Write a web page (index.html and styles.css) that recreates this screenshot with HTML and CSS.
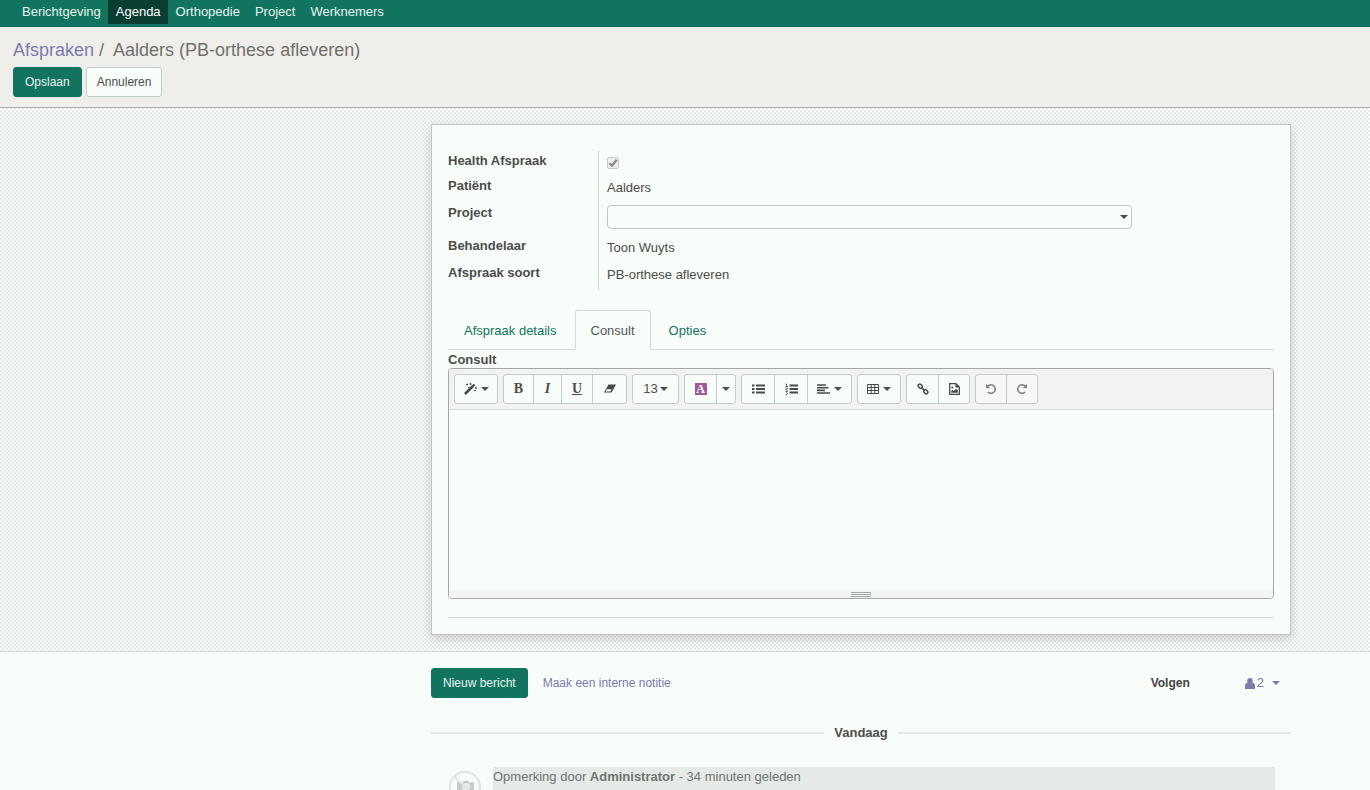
FILE: index.html
```html
<!DOCTYPE html>
<html lang="nl">
<head>
<meta charset="utf-8">
<title>Aalders (PB-orthese afleveren)</title>
<link rel="stylesheet" href="styles.css">
</head>
<body>
<nav class="navbar">
  <a href="#" class="nav-link">Berichtgeving</a>
  <a href="#" class="nav-link active">Agenda</a>
  <a href="#" class="nav-link">Orthopedie</a>
  <a href="#" class="nav-link">Project</a>
  <a href="#" class="nav-link">Werknemers</a>
</nav>
<header class="control-panel">
  <div class="breadcrumb"><a href="#">Afspraken</a><span class="sep">/</span><span>Aalders (PB-orthese afleveren)</span></div>
  <div class="actions">
    <button class="btn primary">Opslaan</button>
    <button class="btn">Annuleren</button>
  </div>
</header>
<main class="sheet-bg">
  <section class="sheet">
    <div class="group">
      <div class="row check-row"><label for="health">Health Afspraak</label><div class="cell"><span class="check"><input type="checkbox" id="health" checked disabled><svg viewBox="0 0 12 12" width="12" height="12"><path d="M2.5 6.2 5 8.7 9.7 2.8" fill="none" stroke="#858885" stroke-width="2.2"/></svg></span></div></div>
      <div class="row"><span class="label">Patiënt</span><div class="cell">Aalders</div></div>
      <div class="row project-row"><label for="project">Project</label><div class="cell"><select id="project"><option></option></select></div></div>
      <div class="row"><span class="label">Behandelaar</span><div class="cell">Toon Wuyts</div></div>
      <div class="row"><span class="label">Afspraak soort</span><div class="cell">PB-orthese afleveren</div></div>
    </div>
    <div class="tabs">
      <a href="#" class="tab">Afspraak details</a>
      <a href="#" class="tab active">Consult</a>
      <a href="#" class="tab">Opties</a>
    </div>
    <label class="editor-label" for="consult">Consult</label>
    <div class="editor">
      <div class="toolbar">
        <div class="tools">
          <button class="w42" aria-label="Stijl"><svg viewBox="0 0 13 12" width="13" height="12"><path d="M1 11 8.5 3.5" stroke="#444b48" stroke-width="2.600"/><path d="M8 4 10.5 1.5" stroke="#444b48" stroke-width="2.4"/><path d="M2 1.5h2M3 .5v2M5.5 1h2M6.500 0v2M11 5h2M12 4v2M4 4.500h1.500M10 7.500h2" stroke="#444b48"/></svg><i class="caret"></i></button>
        </div>
        <div class="tools">
          <button class="w29 serif">B</button><button class="w28 serif italic">I</button><button class="w31 serif under">U</button><button class="w34" aria-label="Wissen"><svg viewBox="0 0 14 10" width="14" height="10"><path d="M5.500.5H13L8.500 8.500H1Z" fill="#444b48"/><path d="M3.800 5.200H8.500L7.300 7.500H2.600Z" fill="#f8fdf9"/></svg></button>
        </div>
        <div class="tools"><button class="w45 size">13<i class="caret"></i></button></div>
        <div class="tools">
          <button class="w31" aria-label="Kleur"><span class="swatch">A</span></button><button class="w19" aria-label="Meer kleuren"><i class="caret"></i></button>
        </div>
        <div class="tools">
          <button class="w32" aria-label="Lijst"><svg viewBox="0 0 13 10" width="13" height="10"><path d="M4 1.500h9M4 5h9M4 8.500h9M0 1.500h2.500M0 5h2.500M0 8.500h2.500" stroke="#444b48" stroke-width="2"/></svg></button><button class="w33" aria-label="Genummerde lijst"><svg viewBox="0 0 13 12" width="13" height="12"><path d="M4.500 2.500h8.500M4.500 6h8.500M4.500 9.500h8.500" stroke="#444b48" stroke-width="2"/><path d="M.5 1H1.500V3.500M.5 3.500H3M.5 5H2.500L.8 7H3M.5 8.500H2.500L1.500 9.700 2.500 10.500 2 11.500H.5" fill="none" stroke="#444b48" stroke-width=".8"/></svg></button><button class="w44" aria-label="Uitlijnen"><svg viewBox="0 0 13 10" width="13" height="10"><path d="M0 1h9M0 3.700h11.500M0 6.400h8M0 9h13" stroke="#444b48" stroke-width="1.600"/></svg><i class="caret"></i></button>
        </div>
        <div class="tools"><button class="w42" aria-label="Tabel"><svg viewBox="0 0 12 10" width="12" height="10"><path d="M.5.5h11v9H.5ZM4.200 0v10M7.800 0v10M0 3.500h12M0 6.500h12" fill="none" stroke="#444b48"/></svg><i class="caret"></i></button></div>
        <div class="tools">
          <button class="w31" aria-label="Link"><svg viewBox="0 0 12 12" width="12" height="12"><g fill="none" stroke="#444b48" stroke-width="1.500"><rect x="-2.200" y="-1.700" width="4.400" height="3.400" rx="1.400" transform="translate(3.200 3.200) rotate(45)"/><rect x="-2.200" y="-1.700" width="4.400" height="3.400" rx="1.400" transform="translate(8.800 8.800) rotate(45)"/><path d="M4.300 4.300 7.700 7.700"/></g></svg></button><button class="w31" aria-label="Afbeelding"><svg viewBox="0 0 11 12" width="11" height="12"><path d="M.7.700h6.300L10.300 4v7.300H.7Z" fill="none" stroke="#444b48" stroke-width="1.300"/><path d="M6.500.5V4.500H10.500M2.200 9.800V8l1.300-1.300L4.700 8 7 5.700 8.800 7.500V9.800Z" fill="#444b48"/><circle cx="3.300" cy="4.500" r="1" fill="#444b48"/></svg></button>
        </div>
        <div class="tools off">
          <button disabled class="w30" aria-label="Ongedaan maken"><svg viewBox="0 0 12 12" width="12" height="12"><path d="M2.500 3.500A4.300 4.300 0 1 1 2.800 9" fill="none" stroke="#858687" stroke-width="1.700"/><path d="M1 .8V5.200H5.400Z" fill="#858687"/></svg></button><button disabled class="w31" aria-label="Opnieuw"><svg viewBox="0 0 12 12" width="12" height="12"><path d="M9.500 3.500A4.300 4.300 0 1 0 9.200 9" fill="none" stroke="#858687" stroke-width="1.700"/><path d="M11 .8V5.200H6.600Z" fill="#858687"/></svg></button>
        </div>
      </div>
      <textarea id="consult"></textarea>
      <div class="resizer"><i class="grip"></i></div>
    </div>
    <hr class="rule">
  </section>
</main>
<section class="chatter">
  <div class="chat-inner">
    <div class="chat-top">
      <button class="btn primary">Nieuw bericht</button>
      <button class="link">Maak een interne notitie</button>
      <button class="follow">Volgen</button>
      <button class="followers"><svg viewBox="0 0 10 11" width="10" height="11"><circle cx="5" cy="2.700" r="2.700" fill="#7c7bad"/><path d="M0 11V8Q0 5 2.500 4.500 5 6 7.500 4.500 10 5 10 8V11Z" fill="#7c7bad"/></svg>2<i class="caret"></i></button>
    </div>
    <div class="day">Vandaag</div>
    <article class="message">
      <svg class="avatar" viewBox="0 0 32 32" width="32" height="32"><circle cx="16" cy="16" r="15" fill="none" stroke="#e0e4e1" stroke-width="2"/><path d="M8 11h3l2 1 2-2h4l2 2 1-1h3v12H8Z" fill="#c9cdca"/><circle cx="17" cy="16" r="4" fill="#e8ece9"/><path d="M5 5 27 27" stroke="#e0e4e1" stroke-width="2"/></svg>
      <div class="bubble">Opmerking door <b>Administrator</b> - 34 minuten geleden</div>
    </article>
  </div>
</section>
</body>
</html>
```
FILE: styles.css
```css
* { box-sizing: border-box; }
html, body { height: 100%; }
body { margin: 0; overflow: hidden; background: #f8fdf9; color: #4c4c4c; font: 13px/18px "Liberation Sans", Arial, sans-serif; }
a { text-decoration: none; color: #7c7bad; }
button, select, textarea { font: inherit; color: inherit; }
.navbar { display: flex; height: 27px; padding: 0 14px; background: #12745f; border-bottom: 1px solid #0c6c58; }
.nav-link { height: 24px; padding: 3px 7px 3px 8px; color: #e6f5ef; }
.nav-link.active { background: #0b3d33; color: #fff; }
.control-panel { height: 81px; padding: 12px 13px; background: #f0eeea; border-bottom: 1px solid #a9aaa9; }
.breadcrumb { font-size: 18px; line-height: 22px; color: #6f716e; margin-bottom: 6px; }
.sep { padding: 0 9px 0 5px; }
.actions { display: flex; gap: 4px; }
.btn { height: 30px; padding: 0 10px; border: 1px solid #c4ccc7; border-radius: 3px; background: #f8fdf9; font-size: 12px; }
.btn.primary { padding: 0 11px; background: #12745f; border-color: #12745f; color: #e6f5ef; }
.sheet-bg { padding: 16px 0 16px 352px; border-bottom: 1px solid #d4dad6; background: repeating-conic-gradient(#e5eae7 0 25%, #f8fdf9 0 50%) 0 0 / 4px 4px; }
.sheet { max-width: 860px; margin: 0 auto; padding: 26px 16px 16px; background: #f8fdf9; border: 1px solid #c3c5c8; box-shadow: 0 4px 10px rgba(60, 50, 60, .2); }
.group { margin-bottom: 20px; }
.row { display: grid; grid-template-columns: 150px 534px; min-height: 27px; }
.row label, .row .label { padding-top: 1px; font-weight: bold; }
.check-row { min-height: 25px; }
.project-row { min-height: 33px; }
.cell { padding: 3px 0 0 8px; border-left: 1px solid #d0d5d2; }
.project-row .cell { padding-top: 2px; }
.check { display: grid; width: 12px; height: 12px; margin-top: 3px; }
.check input, .check svg { grid-area: 1 / 1; }
.check input { appearance: none; width: 12px; height: 12px; margin: 0; border: 1px solid #c5c9c6; border-radius: 2px; background: #eceeec; }
select { appearance: none; display: block; width: 525px; height: 24px; border: 1px solid #c0c7c3; border-radius: 4px; background: #f8fdf9 url("data:image/svg+xml,%3Csvg xmlns='http://www.w3.org/2000/svg' width='8' height='4'%3E%3Cpath d='M0 0h8L4 4z' fill='%23444b48'/%3E%3C/svg%3E") no-repeat right 3px center; }
.tabs { display: flex; height: 40px; border-bottom: 1px solid #d4dad6; }
.tab { height: 40px; padding: 12px 16px; color: #12745f; }
.tab + .tab { margin-left: 2px; }
.tab.active { padding: 11px 15px; border: 1px solid #d4dad6; border-bottom-color: #f8fdf9; border-radius: 3px 3px 0 0; background: #f8fdf9; color: #555; }
.editor-label { display: block; height: 18px; padding-top: 1px; font-weight: bold; }
.editor { border: 1px solid #a2a8a5; border-radius: 4px; overflow: hidden; }
.toolbar { display: flex; gap: 5px; padding: 5px; height: 41px; background: #f0f3f0; border-bottom: 1px solid #d4dad6; }
.tools { display: flex; height: 30px; border: 1px solid #c4ccc7; border-radius: 3px; background: #f8fdf9; overflow: hidden; }
.tools button { display: flex; align-items: center; justify-content: center; gap: 4px; padding: 0; border: 0; background: none; }
.tools button + button { border-left: 1px solid #c4ccc7; }
.tools .serif { font: bold 14px/18px "Liberation Serif", serif; }
.tools .italic { font-style: italic; }
.tools .under { text-decoration: underline; }
.tools .size { gap: 2px; }
.caret { width: 0; height: 0; border: 4px solid transparent; border-top-color: currentColor; border-bottom: 0; }
.swatch { width: 12px; height: 12px; background: #a0599a; color: #fff; font: bold 12px/12px "Liberation Serif", serif; }
.off { background: #f7f7f6; }
.w19 { width: 19px; }
.w28 { width: 28px; }
.w29 { width: 29px; }
.w30 { width: 30px; }
.w31 { width: 31px; }
.w32 { width: 32px; }
.w33 { width: 33px; }
.w34 { width: 34px; }
.w42 { width: 42px; }
.w44 { width: 44px; }
.w45 { width: 45px; }
textarea { display: block; width: 100%; height: 180px; padding: 10px; border: 0; outline: 0; resize: none; background: #f8fdf9; }
.resizer { display: flex; justify-content: center; height: 8px; padding-top: 2px; background: #f2f5f2; }
.grip { width: 20px; height: 5px; background: repeating-linear-gradient(#a2a8a5 0 1px, transparent 1px 2px); }
.rule { margin: 18px 0 0; border: 0; border-top: 1px solid #d4dad6; }
.chatter { padding: 16px 0 0 352px; }
.chat-inner { max-width: 860px; margin: 0 auto; }
.chat-top { display: flex; align-items: center; }
.chat-top .link, .follow, .followers { border: 0; padding: 0; background: none; }
.chat-top .link { margin-left: 15px; color: #7c7bad; font-size: 12px; }
.follow { margin-left: auto; font-weight: bold; font-size: 12px; color: #444; }
.followers { display: flex; align-items: center; gap: 2px; margin: 0 11px 0 55px; color: #7c7bad; }
.followers .caret { margin-left: 6px; }
.day { display: flex; align-items: center; gap: 10px; margin-top: 26px; font-weight: bold; }
.day::before, .day::after { content: ""; flex: 1; height: 2px; background: #e5eae7; }
.message { display: flex; align-items: flex-start; gap: 12px; margin: 25px 16px 0 18px; }
.avatar { margin-top: 4px; }
.bubble { flex: 1; height: 60px; background: #e5eae7; color: #707572; line-height: 20px; }
```
